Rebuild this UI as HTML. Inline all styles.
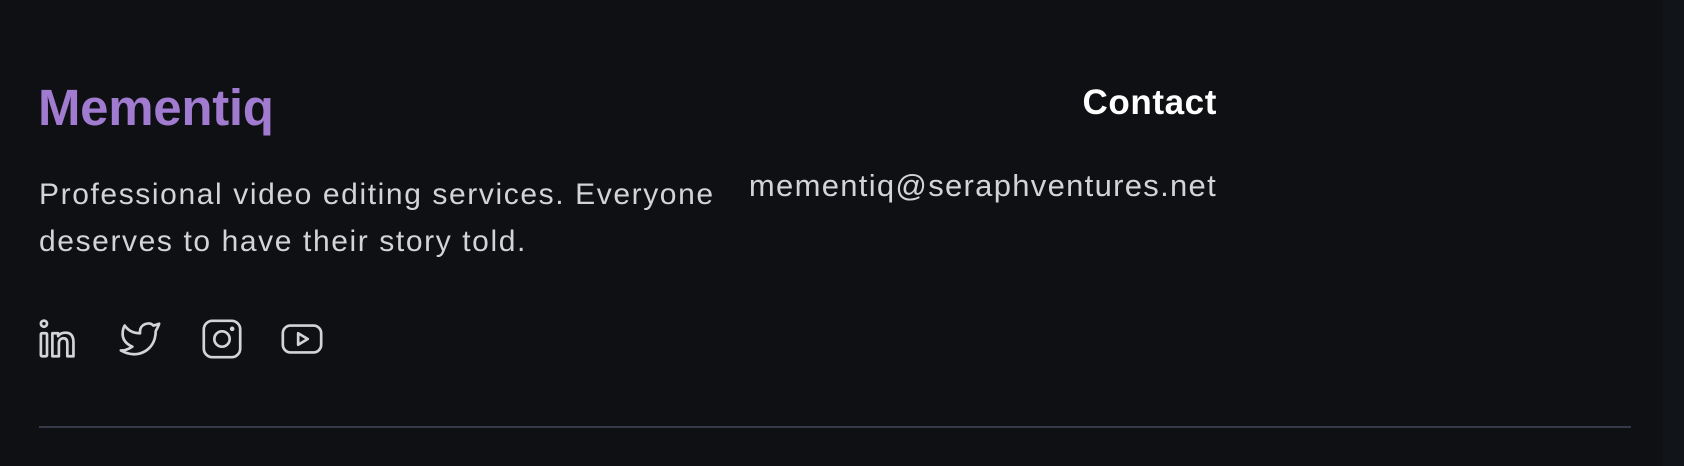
<!DOCTYPE html>
<html><head><meta charset="utf-8"><style>
html,body{margin:0;padding:0;width:1684px;height:466px;background:#0f1013;overflow:hidden;font-family:"Liberation Sans",sans-serif;}
.abs{position:absolute;white-space:nowrap;}
.brand{left:38px;top:78px;font-size:51px;font-weight:bold;color:#a07bd0;letter-spacing:-0.3px;}
.desc{left:39px;top:171px;font-size:30px;line-height:47px;color:#d4d4d8;letter-spacing:1.6px;}
.contact{left:700px;width:517px;text-align:right;top:83px;font-size:35px;font-weight:bold;color:#fff;letter-spacing:0.6px;}
.email{left:700px;width:517px;text-align:right;top:168px;font-size:31px;color:#d4d4d8;letter-spacing:1.3px;}
.line{position:absolute;left:39px;width:1592px;top:426px;height:2px;background:#363946;}
.sb{position:absolute;left:1663px;top:0;width:21px;height:466px;background:#111419;}
svg{position:absolute;top:316px;}
</style></head><body>
<div class="abs brand">Mementiq</div>
<div class="abs desc">Professional video editing services. Everyone<br>deserves to have their story told.</div>
<div class="abs contact">Contact</div>
<div class="abs email">mementiq@seraphventures.net</div>
<svg style="left:38px" width="46" height="46" viewBox="0 0 24 24" fill="none" stroke="#d4d4d8" stroke-width="1.4" stroke-linejoin="round"><rect x="1.5" y="9" width="3.2" height="12" rx=".6"/><circle cx="3.1" cy="4" r="1.6"/><path d="M7.5 21V9h3v1.5c.8-1.2 2.2-1.8 3.8-1.8 3 0 4.2 2 4.2 5V21h-3.2v-6.8c0-1.6-.6-2.6-2-2.6s-2.4 1-2.4 2.6V21z"/></svg>
<svg style="left:117px" width="46" height="46" viewBox="0 0 24 24" fill="none" stroke="#d4d4d8" stroke-width="1.4" stroke-linejoin="round" stroke-linecap="round"><path d="M22 4.01c-1 .49-1.98.689-3 .99-1.121-1.265-2.783-1.335-4.38-.737S11.977 6.323 12 8v1c-3.245.083-6.135-1.395-8-4 0 0-4.182 7.433 4 11-1.872 1.247-3.739 2.088-6 2 3.308 1.803 6.913 2.423 10.034 1.517 3.58-1.04 6.522-3.723 7.651-7.742a13.840 13.840 0 0 0 .497-3.753c0-.249 1.510-2.772 1.818-4.013z"/></svg>
<svg style="left:199px" width="46" height="46" viewBox="0 0 24 24" fill="none" stroke="#d4d4d8" stroke-width="1.4"><rect x="2.5" y="2.5" width="19" height="19" rx="4.5"/><circle cx="12" cy="12" r="4"/><circle cx="17.3" cy="6.7" r=".5" fill="#d4d4d8"/></svg>
<svg style="left:279px" width="46" height="46" viewBox="0 0 24 24" fill="none" stroke="#d4d4d8" stroke-width="1.4" stroke-linejoin="round"><rect x="2" y="5" width="20" height="14" rx="4"/><path d="M10 9l5 3-5 3z"/></svg>
<div class="line"></div>
<div class="sb"></div>
</body></html>
